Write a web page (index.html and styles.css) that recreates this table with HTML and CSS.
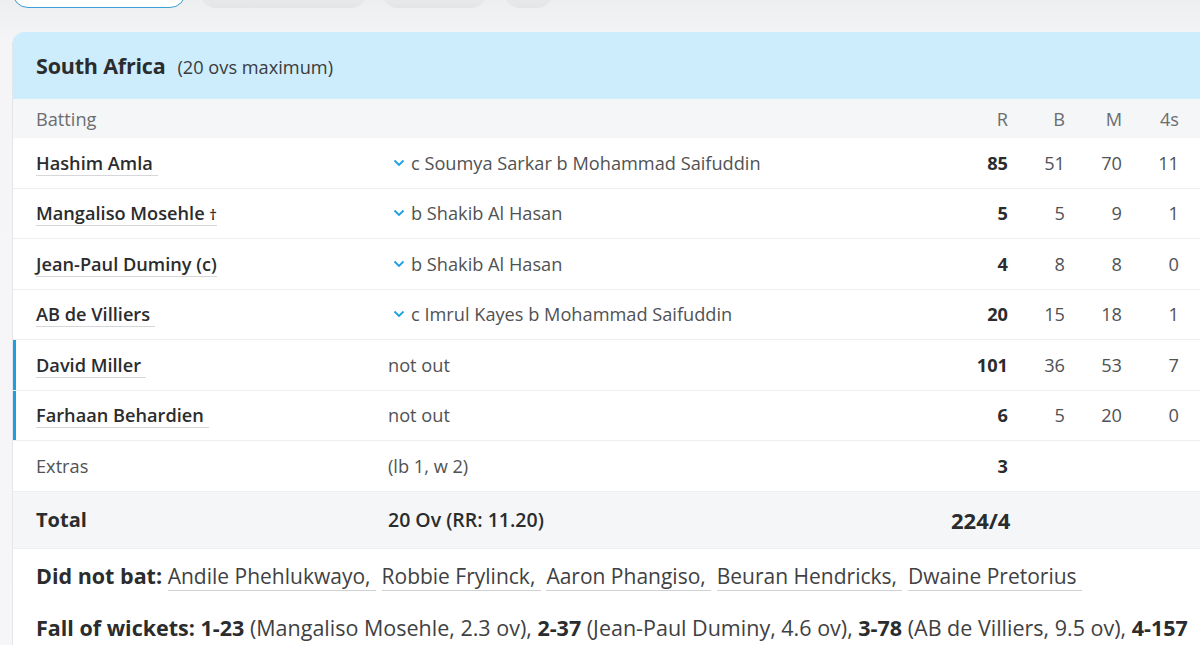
FILE: index.html
```html
<!DOCTYPE html>
<html>
<head>
<meta charset="utf-8">
<link rel="stylesheet" href="styles.css">
</head>
<body>
<div class="tabbar">
  <div class="tab tab-active"></div>
  <div class="tab tab-w1"></div>
  <div class="tab tab-w2"></div>
  <div class="tab tab-w3"></div>
</div>
<div class="card">
  <div class="card-head">
    <span class="team">South Africa</span>
    <span class="ovs">(20 ovs maximum)</span>
  </div>
  <div class="row row-head">
    <div class="c-name">Batting</div>
    <div class="c-dis"></div>
    <div class="c-num">R</div>
    <div class="c-num">B</div>
    <div class="c-num">M</div>
    <div class="c-num">4s</div>
  </div>
  <div class="row">
    <div class="c-name"><span class="player">Hashim Amla&nbsp;</span></div>
    <div class="c-dis"><span class="chev"><svg width="12" height="8" viewBox="0 0 12 8"><path d="M1.5 1.5 L6 6 L10.5 1.5" fill="none" stroke="#1ba1e2" stroke-width="1.8"/></svg></span>c Soumya Sarkar b Mohammad Saifuddin</div>
    <div class="c-num runs">85</div>
    <div class="c-num">51</div>
    <div class="c-num">70</div>
    <div class="c-num">11</div>
  </div>
  <div class="row">
    <div class="c-name"><span class="player">Mangaliso Mosehle <span class="wk">†</span></span></div>
    <div class="c-dis"><span class="chev"><svg width="12" height="8" viewBox="0 0 12 8"><path d="M1.5 1.5 L6 6 L10.5 1.5" fill="none" stroke="#1ba1e2" stroke-width="1.8"/></svg></span>b Shakib Al Hasan</div>
    <div class="c-num runs">5</div>
    <div class="c-num">5</div>
    <div class="c-num">9</div>
    <div class="c-num">1</div>
  </div>
  <div class="row">
    <div class="c-name"><span class="player">Jean-Paul Duminy (c)</span></div>
    <div class="c-dis"><span class="chev"><svg width="12" height="8" viewBox="0 0 12 8"><path d="M1.5 1.5 L6 6 L10.5 1.5" fill="none" stroke="#1ba1e2" stroke-width="1.8"/></svg></span>b Shakib Al Hasan</div>
    <div class="c-num runs">4</div>
    <div class="c-num">8</div>
    <div class="c-num">8</div>
    <div class="c-num">0</div>
  </div>
  <div class="row">
    <div class="c-name"><span class="player">AB de Villiers&nbsp;</span></div>
    <div class="c-dis"><span class="chev"><svg width="12" height="8" viewBox="0 0 12 8"><path d="M1.5 1.5 L6 6 L10.5 1.5" fill="none" stroke="#1ba1e2" stroke-width="1.8"/></svg></span>c Imrul Kayes b Mohammad Saifuddin</div>
    <div class="c-num runs">20</div>
    <div class="c-num">15</div>
    <div class="c-num">18</div>
    <div class="c-num">1</div>
  </div>
  <div class="row notout">
    <div class="c-name"><span class="player">David Miller&nbsp;</span></div>
    <div class="c-dis">not out</div>
    <div class="c-num runs">101</div>
    <div class="c-num">36</div>
    <div class="c-num">53</div>
    <div class="c-num">7</div>
  </div>
  <div class="row notout">
    <div class="c-name"><span class="player">Farhaan Behardien&nbsp;</span></div>
    <div class="c-dis">not out</div>
    <div class="c-num runs">6</div>
    <div class="c-num">5</div>
    <div class="c-num">20</div>
    <div class="c-num">0</div>
  </div>
  <div class="row">
    <div class="c-name extras">Extras</div>
    <div class="c-dis">(lb 1, w 2)</div>
    <div class="c-num runs">3</div>
    <div class="c-num"></div>
    <div class="c-num"></div>
    <div class="c-num"></div>
  </div>
  <div class="row row-total">
    <div class="c-name total">Total</div>
    <div class="c-dis ov">20 Ov (RR: 11.20)</div>
    <div class="c-num score">224/4</div>
    <div class="c-num"></div>
    <div class="c-num"></div>
    <div class="c-num"></div>
  </div>
  <div class="notes">
    <p class="note"><b>Did not bat:</b> <span class="lk">Andile Phehlukwayo,&nbsp;</span> <span class="lk">Robbie Frylinck,&nbsp;</span> <span class="lk">Aaron Phangiso,&nbsp;</span> <span class="lk">Beuran Hendricks,&nbsp;</span> <span class="lk">Dwaine Pretorius&nbsp;</span></p>
    <p class="note"><b>Fall of wickets:</b> <b>1-23</b> (Mangaliso Mosehle, 2.3 ov), <b>2-37</b> (Jean-Paul Duminy, 4.6 ov), <b>3-78</b> (AB de Villiers, 9.5 ov), <b>4-157</b> (Hashim Amla, 16.4 ov)</p>
  </div>
</div>
</body>
</html>
```
FILE: styles.css
```css
html, body {
  margin: 0;
  padding: 0;
}
body {
  background: linear-gradient(#eceef0 0px, #f5f5f7 40px, #f6f6f8 100%);
  font-family: "Open Sans", "Noto Sans", sans-serif;
  color: #2b2c2d;
  overflow: hidden;
  width: 1200px;
  height: 645px;
}
.tabbar {
  height: 8px;
  overflow: hidden;
  display: flex;
  align-items: flex-end;
  gap: 15px;
  padding-left: 12px;
}
.tab {
  flex: none;
  height: 36px;
  border-radius: 16px;
  background: linear-gradient(#f2f3f4, #e4e5e7);
}
.tab-active {
  width: 174px;
  box-sizing: border-box;
  background: #fff;
  border: 1.5px solid #3d9fd3;
}
.tab-w1 { width: 167px; margin-left: -1px; }
.tab-w2 { width: 105px; }
.tab-w3 { width: 49px; margin-left: 2px; }

.card {
  margin: 24px 0 0 12px;
  width: 1200px;
  background: #fff;
  border-left: 1px solid #e3e5e8;
  border-top-left-radius: 12px;
  overflow: hidden;
}
.card-head {
  height: 67px;
  background: #cdedfc;
  display: flex;
  align-items: center;
  padding-left: 23px;
  gap: 12px;
}
.team {
  font-size: 21.5px;
  font-weight: 700;
  color: #2b2c2d;
  letter-spacing: -0.2px;
}
.ovs {
  font-size: 18.2px;
  color: #3a3b3c;
  padding-top: 2px;
}
.row {
  display: grid;
  grid-template-columns: 352px 563px 57px 57px 57px 57px;
  align-items: center;
  height: 49.5px;
  border-bottom: 1px solid #eceef0;
  padding-left: 23px;
  font-size: 18.2px;
  color: #505254;
}
.row-head {
  height: 39px;
  background: #f5f6f8;
  border-bottom: none;
  color: #6b6d70;
}
.notout {
  box-shadow: inset 3px 0 0 #1ba1e2;
}
.c-name {
  white-space: nowrap;
}
.player {
  font-weight: 600;
  color: #2b2c2d;
  border-bottom: 1px solid #d5d7da;
}
.wk {
  font-size: 15px;
  font-weight: 600;
}
.c-dis {
  white-space: nowrap;
  display: flex;
  align-items: center;
}
.chev {
  display: inline-flex;
  width: 23px;
  padding-left: 5px;
  box-sizing: border-box;
}
.c-num {
  text-align: right;
}
.runs {
  font-weight: 700;
  color: #2b2c2d;
}
.extras {
  color: #505254;
}
.row-total {
  height: 56px;
  background: #f5f6f8;
  border-bottom: 1px solid #eceef0;
}
.total {
  font-size: 20px;
  font-weight: 700;
  color: #2b2c2d;
}
.ov {
  font-size: 19.5px;
  font-weight: 600;
  color: #2b2c2d;
}
.score {
  font-size: 22px;
  font-weight: 700;
  color: #2b2c2d;
}
.notes {
  padding: 12px 0 0 23px;
  width: 1166px;
}
.note {
  margin: 0 0 22px 0;
  font-size: 21.5px;
  color: #3f4143;
  line-height: 30px;
}
.note b {
  font-weight: 700;
  color: #2b2c2d;
}
.lk {
  font-size: 21px;
  border-bottom: 1px solid #cfd1d4;
}
```
